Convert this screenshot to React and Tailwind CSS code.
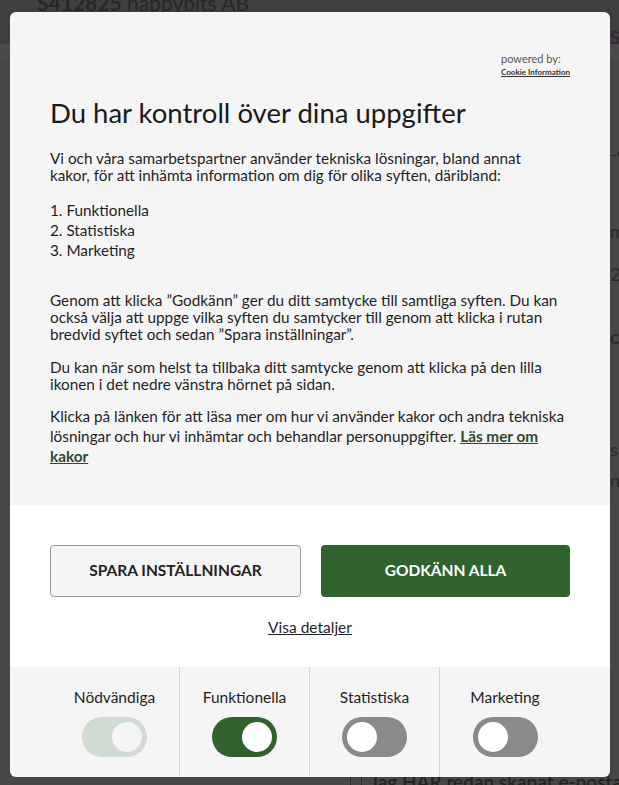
import React, { useState } from "react";

const Toggle = ({ on, locked, onClick }) => {
  let track = "bg-[#8a8a8a]";
  if (locked) track = "bg-[#d0dbd1]";
  else if (on) track = "bg-[#2e632e]";
  return (
    <button
      onClick={locked ? undefined : onClick}
      className={`flex items-center w-[65px] h-[40px] rounded-full px-[5px] ${track} ${
        on ? "justify-end" : "justify-start"
      }`}
    >
      <span
        className={`block w-[30px] h-[30px] rounded-full ${
          locked ? "bg-[#f5f5f5]" : "bg-white"
        }`}
      />
    </button>
  );
};

const categories = [
  { name: "Nödvändiga", locked: true },
  { name: "Funktionella" },
  { name: "Statistiska" },
  { name: "Marketing" },
];

export default function App() {
  const [choices, setChoices] = useState({
    Nödvändiga: true,
    Funktionella: true,
    Statistiska: false,
    Marketing: false,
  });

  return (
    <div className="relative w-[619px] h-[785px] overflow-hidden bg-[#474747] font-['Lato',sans-serif]">
      {/* Page behind the overlay */}
      <div className="h-[44px] bg-[#3f3f3f] flex items-start pl-[37px]">
        <div className="text-[21px] leading-[10px] text-[#262626] -mt-[2px] whitespace-nowrap">
          <span className="font-bold">S412825</span> happybits AB
        </div>
      </div>
      <div className="h-[16px] bg-[#4a4a4a]" />
      <div className="flex">
        <div className="w-[610px] shrink-0" />
        <div className="flex flex-col text-[18px] text-[#2a2a2a] whitespace-nowrap">
          <div className="-mt-[36px] text-[#3a1f35] font-semibold">Si</div>
          <div className="mt-[90px]">-v</div>
          <div className="mt-[50px] font-semibold">m</div>
          <div className="mt-[16px]">2</div>
          <div className="mt-[36px] font-bold">c</div>
          <div className="mt-[85px]">s</div>
          <div className="mt-[4px]">n</div>
        </div>
      </div>
      <div className="absolute left-[350px] top-[768px] flex items-center gap-[8px] whitespace-nowrap">
        <span className="block w-[12px] h-[12px] border border-[#2a2a2a] rounded-[2px]" />
        <span className="text-[19px] font-semibold text-[#222]">Jag HAR redan skapat e-postadress</span>
      </div>

      {/* Consent modal */}
      <div className="absolute left-[10px] top-[12px] w-[600px] h-[765px] rounded-[6px] overflow-hidden flex flex-col text-[#1f1f1f]">
        <div className="h-[493px] bg-[#f5f5f5] px-10 pt-10">
          <div className="flex justify-end">
            <div className="flex flex-col">
              <span className="text-[11px] leading-[14px] text-[#555]">powered by:</span>
              <span className="text-[8px] leading-[12px] font-bold underline text-[#333]">
                Cookie Information
              </span>
            </div>
          </div>
          <h1 className="mt-[19px] text-[27.5px] leading-[32px] text-[#1a1a1a]">
            Du har kontroll över dina uppgifter
          </h1>
          <div className="text-[15.3px] leading-[17px]">
            <p className="mt-[21px]">
              Vi och våra samarbetspartner använder tekniska lösningar, bland annat
              <br />
              kakor, för att inhämta information om dig för olika syften, däribland:
            </p>
            <ol className="mt-[16px] leading-[20px]">
              <li>1. Funktionella</li>
              <li>2. Statistiska</li>
              <li>3. Marketing</li>
            </ol>
            <p className="mt-[32px]">
              Genom att klicka ”Godkänn” ger du ditt samtycke till samtliga syften. Du kan också
              välja att uppge vilka syften du samtycker till genom att klicka i rutan bredvid
              syftet och sedan ”Spara inställningar”.
            </p>
            <p className="mt-[16px]">
              Du kan när som helst ta tillbaka ditt samtycke genom att klicka på den lilla ikonen i
              det nedre vänstra hörnet på sidan.
            </p>
            <p className="mt-[13px] leading-[20px]">
              Klicka på länken för att läsa mer om hur vi använder kakor och andra tekniska
              lösningar och hur vi inhämtar och behandlar personuppgifter.{" "}
              <a href="#" className="font-bold underline text-[#2e4a2e]">
                Läs mer om kakor
              </a>
            </p>
          </div>
        </div>

        <div className="h-[162px] bg-white px-10 pt-10 flex flex-col items-center">
          <div className="flex w-full gap-5">
            <button className="flex-1 h-[52px] rounded-[4px] border border-[#9a9a9a] bg-[#f5f5f5] text-[15.5px] font-bold text-[#222]">
              SPARA INSTÄLLNINGAR
            </button>
            <button className="flex-1 h-[52px] rounded-[4px] bg-[#2e632e] text-[15.5px] font-bold text-white">
              GODKÄNN ALLA
            </button>
          </div>
          <a href="#" className="mt-[20px] text-[15.5px] leading-[20px] underline text-[#1f1f1f]">
            Visa detaljer
          </a>
        </div>

        <div className="flex-1 bg-[#f5f5f5] pl-10 flex">
          {categories.map((c, i) => (
            <div
              key={c.name}
              className={`w-[130px] flex flex-col items-center pt-[20px] ${
                i < 3 ? "border-r border-[#d4d4d4]" : ""
              }`}
            >
              <span className="text-[15.5px] leading-[20px] text-[#1f1f1f]">{c.name}</span>
              <div className="mt-[10px]">
                <Toggle
                  on={choices[c.name]}
                  locked={c.locked}
                  onClick={() => setChoices((p) => ({ ...p, [c.name]: !p[c.name] }))}
                />
              </div>
            </div>
          ))}
        </div>
      </div>
    </div>
  );
}
